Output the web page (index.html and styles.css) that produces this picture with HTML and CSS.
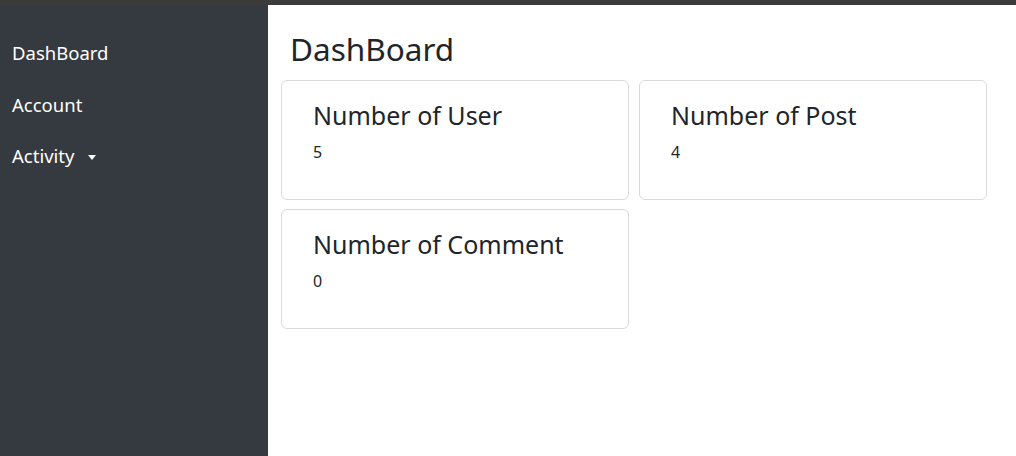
FILE: index.html
```html
<!DOCTYPE html>
<html>
<head>
<meta charset="utf-8">
<link rel="stylesheet" href="styles.css">
</head>
<body>
<div class="topbar"></div>
<div class="layout">
  <nav class="sidebar">
    <a class="nav-item">DashBoard</a>
    <a class="nav-item">Account</a>
    <a class="nav-item">Activity<span class="caret"></span></a>
  </nav>
  <main class="main">
    <h2 class="page-title">DashBoard</h2>
    <div class="cards">
      <div class="card">
        <h4 class="card-title">Number of User</h4>
        <p class="card-value">5</p>
      </div>
      <div class="card">
        <h4 class="card-title">Number of Post</h4>
        <p class="card-value">4</p>
      </div>
      <div class="card">
        <h4 class="card-title">Number of Comment</h4>
        <p class="card-value">0</p>
      </div>
    </div>
  </main>
</div>
</body>
</html>
```
FILE: styles.css
```css
html, body {
  margin: 0;
  padding: 0;
  height: 100%;
}
body {
  font-family: "Noto Sans", "Open Sans", sans-serif;
  color: #212529;
  background: #fff;
  display: flex;
  flex-direction: column;
  overflow: hidden;
}
.topbar {
  height: 5px;
  background: #3b3b3b;
  flex: none;
}
.layout {
  flex: 1;
  display: flex;
}
.sidebar {
  width: 268px;
  flex: none;
  background: #343a40;
  display: flex;
  flex-direction: column;
  padding-top: 33px;
}
.nav-item {
  color: #fff;
  font-size: 18.5px;
  padding: 0 12px;
  height: 51.5px;
  line-height: 30px;
  display: flex;
  align-items: flex-start;
}
.caret {
  display: inline-block;
  width: 0;
  height: 0;
  margin-left: 14px;
  margin-top: 14px;
  border-top: 5px solid #fff;
  border-left: 4.5px solid transparent;
  border-right: 4.5px solid transparent;
}
.main {
  flex: 1;
  padding: 0 13px;
}
.page-title {
  font-size: 31.5px;
  font-weight: 400;
  margin: 24px 0 11px 9px;
  line-height: 40px;
}
.cards {
  display: grid;
  grid-template-columns: 348px 348px;
  column-gap: 10px;
  row-gap: 9px;
}
.card {
  height: 120px;
  box-sizing: border-box;
  border: 1px solid #dadada;
  border-radius: 6px;
  padding: 18px 31px;
}
.card-title {
  font-size: 25px;
  font-weight: 400;
  margin: 0;
  line-height: 32px;
}
.card-value {
  font-size: 16px;
  margin: 11px 0 0;
  line-height: 20px;
}
```
